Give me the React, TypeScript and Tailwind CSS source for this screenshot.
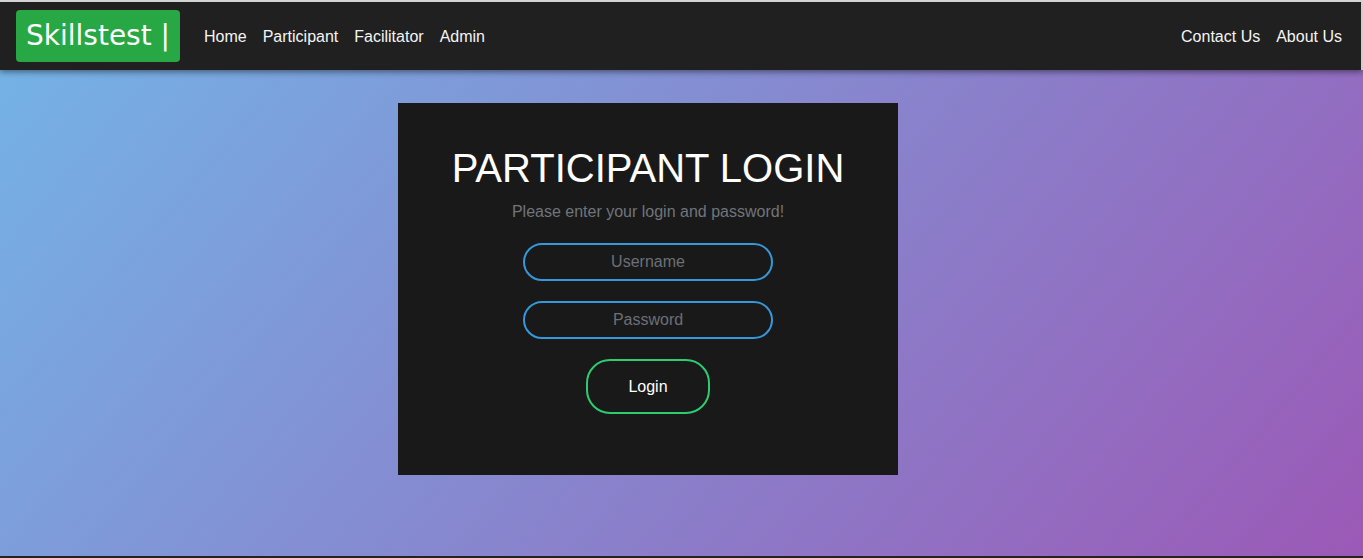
export default function App() {
  const links = ["Home", "Participant", "Facilitator", "Admin"];

  return (
    <div className="h-[558px] w-full flex flex-col overflow-hidden border-t-2 border-b-2 border-t-[#d4d4d4] border-b-[#232323] font-['Liberation_Sans',Arial,sans-serif] bg-[linear-gradient(130deg,#73b5e6,#9b59b6)]">
      <nav className="relative z-10 h-[68px] shrink-0 flex items-center justify-between bg-[#202020] pl-4 pr-[19px] border-r-2 border-r-[#cfcfcf] shadow-[0_2px_6px_rgba(0,0,0,0.45)]">
        <div className="flex items-center">
          <div className="h-[52px] w-[164px] flex items-center pl-[10px] rounded bg-[#28a745] text-white text-[28px] font-['DejaVu_Sans',sans-serif]">
            Skillstest |
          </div>
          <ul className="flex items-center gap-4 ml-6 pt-[2px] text-base text-[#f4f4f4]">
            {links.map((l) => (
              <li key={l}>{l}</li>
            ))}
          </ul>
        </div>
        <ul className="flex items-center gap-4 pt-[2px] text-base text-[#f4f4f4]">
          <li>Contact Us</li>
          <li>About Us</li>
        </ul>
      </nav>

      <main className="flex-1 flex justify-start pl-[398px] pt-[33px]">
        <div className="w-[500px] h-[372px] bg-[#191919] flex flex-col items-center pt-[41px]">
          <h1 className="text-[40px] leading-[48px] text-white">PARTICIPANT LOGIN</h1>
          <p className="mt-2 text-base leading-6 text-[#6f757b]">Please enter your login and password!</p>
          <input
            type="text"
            placeholder="Username"
            className="mt-[19px] w-[250px] h-[38px] rounded-full border-2 border-[#3498db] bg-transparent text-center text-base text-white placeholder:text-[#6b7077] outline-none"
          />
          <input
            type="password"
            placeholder="Password"
            className="mt-[20px] w-[250px] h-[38px] rounded-full border-2 border-[#3498db] bg-transparent text-center text-base text-white placeholder:text-[#6b7077] outline-none"
          />
          <button className="mt-[20px] w-[124px] h-[55px] rounded-[24px] border-2 border-[#2ecc71] bg-transparent text-base text-white">
            Login
          </button>
        </div>
      </main>
    </div>
  );
}
